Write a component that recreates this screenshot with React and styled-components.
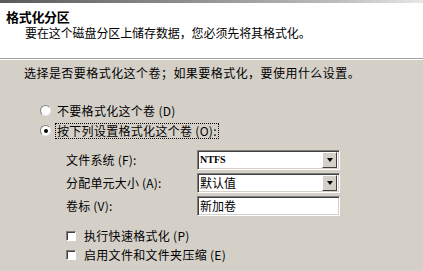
import styled, { createGlobalStyle } from "styled-components";

const Global = createGlobalStyle`
  html, body { margin: 0; padding: 0; }
  body {
    width: 423px;
    height: 271px;
    overflow: hidden;
    background: #d4d0c8;
    font-family: "Noto Sans CJK SC", "DejaVu Sans", sans-serif;
    font-size: 12px;
    color: #000;
  }
`

const Page = styled.div`
  width: 423px;
  height: 271px;
  display: flex;
  flex-direction: column;
  background: #d4d0c8;
`
const TopStrip = styled.div`
  height: 3px;
  background: linear-gradient(to right, #5a5a5a, #8a8a8a 40%, #bdbdbd 80%, #e8e8e8);
`
const Header = styled.div`
  height: 56px;
  background: #fff;
  border-bottom: 1px solid #a0a0a0;
  box-shadow: 0 1px 0 #fff;
  padding: 6px 0 0 6px;
  box-sizing: border-box;
`
const Title = styled.div`
  font-weight: bold;
  font-size: 13px;
  line-height: 15px;
  letter-spacing: -0.3px;
`
const Subtitle = styled.div`
  margin: 1px 0 0 19px;
  line-height: 15px;
  letter-spacing: -0.1px;
`
const Body = styled.div`
  padding: 6px 0 0 24px;
  display: flex;
  flex-direction: column;
`
const Line = styled.div`
  line-height: 16px;
  letter-spacing: 0.45px;
`
const Options = styled.div`
  margin: 21px 0 0 16px;
  display: flex;
  flex-direction: column;
  gap: 3px;
`
const RadioRow = styled.label`
  display: flex;
  align-items: center;
  gap: 5px;
  height: 17px;
`
const Radio = styled.span`
  width: 11px;
  height: 11px;
  border-radius: 50%;
  background: #fff;
  border: 1px solid #808080;
  border-right-color: #e8e8e8;
  border-bottom-color: #e8e8e8;
  box-sizing: border-box;
  position: relative;
  &::after {
    content: "";
    display: ${p => (p.$checked ? "block" : "none")};
    position: absolute;
    left: 2.5px;
    top: 2.5px;
    width: 4px;
    height: 4px;
    border-radius: 50%;
    background: #000;
  }
`
const Focus = styled.span`
  outline: ${p => (p.$focus ? "1px dotted #000" : "none")};
  padding: 0 1px;
  line-height: 14px;
  letter-spacing: 0.3px;
`
const Settings = styled.div`
  margin: 11px 0 0 42px;
  display: grid;
  grid-template-columns: 131px 143px;
  grid-auto-rows: 20px;
  row-gap: 3px;
  align-items: center;
`
const Label = styled.div`
  line-height: 16px;
  letter-spacing: 0.2px;
`
const Field = styled.div`
  height: 20px;
  box-sizing: border-box;
  background: #fff;
  border: 1px solid;
  border-color: #808080 #fff #fff #808080;
  box-shadow: inset 1px 1px 0 #404040, inset -1px -1px 0 #d4d0c8;
  display: flex;
  align-items: center;
  padding: 0 2px 0 2px;
`
const FieldText = styled.span`
  flex: 1;
  font-family: ${p => (p.$serif ? '"Liberation Serif", serif' : "inherit")};
  font-weight: ${p => (p.$serif ? "bold" : "normal")};
  font-size: ${p => (p.$serif ? "10px" : "12px")};
  line-height: 14px;
`
const DropButton = styled.span`
  width: 15px;
  height: 16px;
  background: #d4d0c8;
  border: 1px solid;
  border-color: #fff #404040 #404040 #fff;
  box-sizing: border-box;
  display: flex;
  align-items: center;
  justify-content: center;
  &::after {
    content: "";
    border-left: 3px solid transparent;
    border-right: 3px solid transparent;
    border-top: 4px solid #000;
  }
`
const Checks = styled.div`
  margin: 12px 0 0 42px;
  display: flex;
  flex-direction: column;
  gap: 4px;
`
const CheckRow = styled.label`
  display: flex;
  align-items: center;
  gap: 8px;
  height: 15px;
  letter-spacing: 0.3px;
`
const Box = styled.span`
  width: 10px;
  height: 10px;
  background: #fff;
  box-sizing: border-box;
  border: 1px solid;
  border-color: #808080 #fff #fff #808080;
  box-shadow: inset 1px 1px 0 #404040;
`

export default function App() {
  return <Page>
    <Global />
    <TopStrip />
    <Header>
      <Title>格式化分区</Title>
      <Subtitle>要在这个磁盘分区上储存数据，您必须先将其格式化。</Subtitle>
    </Header>
    <Body>
      <Line>选择是否要格式化这个卷；如果要格式化，要使用什么设置。</Line>
      <Options>
        <RadioRow><Radio /><Focus>不要格式化这个卷 (D)</Focus></RadioRow>
        <RadioRow><Radio $checked /><Focus $focus>按下列设置格式化这个卷 (O):</Focus></RadioRow>
      </Options>
      <Settings>
        <Label>文件系统 (F):</Label>
        <Field><FieldText $serif>NTFS</FieldText><DropButton /></Field>
        <Label>分配单元大小 (A):</Label>
        <Field><FieldText>默认值</FieldText><DropButton /></Field>
        <Label>卷标 (V):</Label>
        <Field><FieldText>新加卷</FieldText></Field>
      </Settings>
      <Checks>
        <CheckRow><Box /><span>执行快速格式化 (P)</span></CheckRow>
        <CheckRow><Box /><span>启用文件和文件夹压缩 (E)</span></CheckRow>
      </Checks>
    </Body>
  </Page>
}
